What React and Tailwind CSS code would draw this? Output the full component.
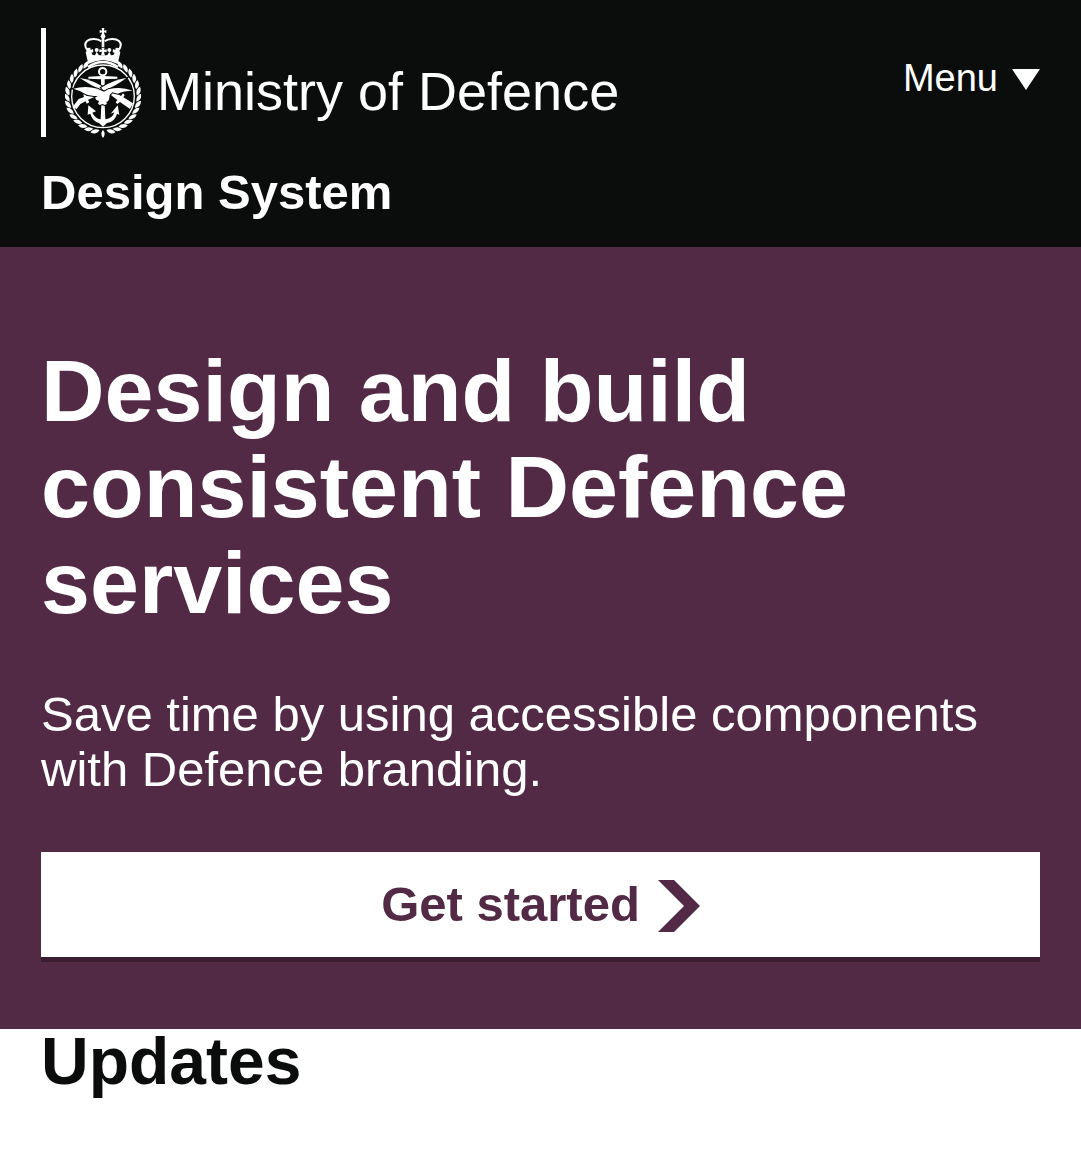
const LEAF_ANGLES = Array.from({ length: 14 }, (_, i) => 12 + i * 10.7);

function WreathHalf() {
  return (
    <g>
      {LEAF_ANGLES.map((a) => (
        <path
          key={a}
          d="M230 344 Q224 361 205 357 Q211 341 230 344Z"
          transform={`rotate(${a} 219 243)`}
        />
      ))}
    </g>
  );
}

function CrownHalf() {
  return (
    <g>
      <path
        d="M214 78 C203 69 181 68 171 77 C163 85 166 97 173 106"
        fill="none"
        stroke="currentColor"
        strokeWidth="6"
      />
      <path d="M167 111 L171 106 L171 98 L181 97 L182 104 L189 101 L190 111 L184 112 L188 119 L195 120 L200 109 L206 119 L219 121 L219 134 Q196 135 175 146 Z" />
      <circle cx="200" cy="104" r="6" />
      <path
        d="M174 155 Q196 140 219 140"
        fill="none"
        stroke="currentColor"
        strokeWidth="7"
      />
    </g>
  );
}

function Crest({ className }) {
  return (
    <svg
      className={className}
      viewBox="105 38 228 330"
      fill="currentColor"
      aria-hidden="true"
    >
      {/* crown */}
      <path d="M215 38 h8 l-1 8 l7 -2 v9 l-7 -2 l1 8 h-8 l1 -8 l-7 2 v-9 l7 2z" />
      <circle cx="219" cy="63" r="7" />
      <path d="M215 68 h8 v27 h-8z" />
      <path d="M214 97 h10 l-2 7 l8 -2 v9 l-8 -2 l3 12 h-12 l3 -12 l-8 2 v-9 l8 2z" />
      <CrownHalf />
      <g transform="translate(438 0) scale(-1 1)">
        <CrownHalf />
      </g>
      {/* ring and wreath */}
      <circle
        cx="219"
        cy="243"
        r="94"
        fill="none"
        stroke="currentColor"
        strokeWidth="4"
      />
      <WreathHalf />
      <g transform="translate(438 0) scale(-1 1)">
        <WreathHalf />
      </g>
      <path d="M219 344 Q229 355 219 368 Q209 355 219 344Z" />
      {/* anchor */}
      <circle
        cx="218"
        cy="169"
        r="11"
        fill="none"
        stroke="currentColor"
        strokeWidth="6"
      />
      <path d="M175 184 L213 182 L213 179 H224 V182 L262 184 V190 L224 192 V216 H213 V192 L175 190Z" />
      <path d="M214 266 h10 l2 46 Q248 309 253 291 L242 295 L263 270 L268 299 L261 295 Q256 318 231 323 L219 334 L207 323 Q187 317 181 295 L173 298 L175 270 L198 288 L187 292 Q195 309 212 312Z" />
      {/* rifles */}
      <path d="M127 276 L146 251 L162 245 L160 237 L167 235 L170 242 L190 238 L195 244 L174 253 L178 261 L170 265 L167 258 L151 266 L140 281Z" />
      <path d="M238 235 L252 230 L273 242 L279 234 L284 239 L280 246 L309 264 L300 281 L270 260 L262 266 L257 261 L262 254Z" />
      <g className="stroke-[#0b0c0c] [paint-order:stroke]" strokeWidth="6">
        {/* crossed swords */}
        <path d="M149 188 Q188 193 229 221 L220 227 Q183 211 149 188Z" />
        <path d="M289 188 Q252 193 213 217 L222 226 Q257 212 289 188Z" />
        {/* eagle */}
        <path d="M130 220 Q166 210 202 220 L222 229 L235 222 Q274 213 308 226 Q282 226 263 235 L247 231 L239 239 L237 253 Q235 259 229 260 L231 266 L224 269 L218 266 L209 269 L204 265 L207 257 Q198 256 195 247 L203 242 Q180 242 166 236 Q152 226 130 220Z" />
      </g>
    </svg>
  );
}

export default function App() {
  return (
    <div className="min-h-screen bg-white font-['Liberation_Sans',Arial,sans-serif] text-[#0b0c0c]">
      <header className="bg-[#0b0c0c] px-[41px] py-7 text-white">
        <div className="flex items-start justify-between">
          <a
            href="#home"
            className="flex h-[109px] items-center border-l-5 border-white pl-[19px]"
          >
            <Crest className="h-[110px] w-[76px] shrink-0" />
            <span className="pt-4 pl-4 text-[54px] leading-[60px] whitespace-nowrap">
              Ministry of Defence
            </span>
          </a>
          <button
            type="button"
            className="mt-7 flex items-center gap-[14px] text-[38px] leading-[44px]"
          >
            Menu
            <svg
              className="mt-[2px] h-[21px] w-[28px]"
              viewBox="0 0 28 21"
              fill="currentColor"
              aria-hidden="true"
            >
              <path d="M0 0H28L14 21Z" />
            </svg>
          </button>
        </div>
        <a
          href="#design-system"
          className="mt-7 block text-[49px] leading-[54px] font-bold"
        >
          Design System
        </a>
      </header>

      <section className="bg-[#532a45] px-[41px] pt-24 pb-[72px] text-white">
        <h1 className="text-[88px] leading-[96px] font-bold">
          Design and build consistent Defence services
        </h1>
        <p className="mt-14 text-[49px] leading-[55px]">
          Save time by using accessible components with Defence branding.
        </p>
        <a
          href="#get-started"
          className="mt-[55px] flex h-[105px] items-center justify-center gap-[18px] bg-white text-[49px] leading-[55px] font-bold text-[#532a45] shadow-[0_5px_0_#3a1d30]"
        >
          Get started
          <svg
            className="mt-[2px] h-[52px] w-[42px]"
            viewBox="0 0 42 52"
            fill="currentColor"
            aria-hidden="true"
          >
            <path d="M0 0H16L42 26L16 52H0L26 26Z" />
          </svg>
        </a>
      </section>

      <main className="px-[41px]">
        <h2 className="text-[66px] leading-[64px] font-bold">Updates</h2>
      </main>
    </div>
  );
}
